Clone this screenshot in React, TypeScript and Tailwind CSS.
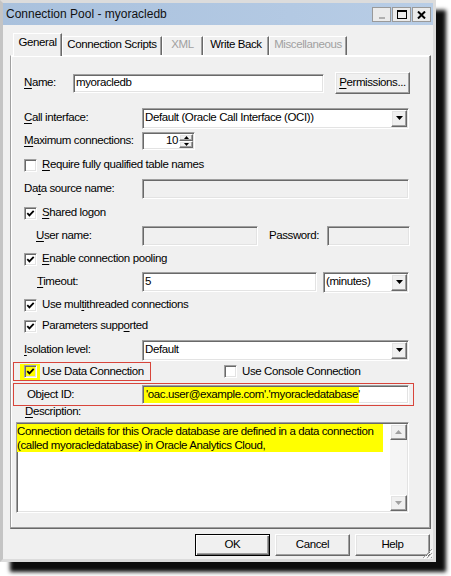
import React from "react";

const F = "font-['Liberation_Sans',Arial,sans-serif]";
const sunken =
  "border border-t-[#a0a0a0] border-l-[#a0a0a0] border-b-white border-r-white shadow-[inset_1px_1px_0_#696969,inset_-1px_-1px_0_#e3e3e3]";
const raised =
  "border border-t-white border-l-white border-b-[#696969] border-r-[#696969] shadow-[inset_-1px_-1px_0_#a0a0a0,inset_1px_1px_0_#e3e3e3]";

function U({ children }: { children: React.ReactNode }) {
  return <span className="underline underline-offset-[1.5px] decoration-[1px]">{children}</span>;
}

function Check({ checked, yellow }: { checked?: boolean; yellow?: boolean }) {
  return (
    <div
      className={`w-[13px] h-[13px] shrink-0 flex items-center justify-center ${
        yellow ? "bg-[#ffff00]" : "bg-white"
      } ${sunken}`}
    >
      {checked && (
        <svg width="9" height="9" viewBox="0 0 9 9">
          <path d="M1.3 4.2 L3.4 6.4 L7.7 1.8" stroke="#000" strokeWidth="1.8" fill="none" />
        </svg>
      )}
    </div>
  );
}

function DownArrow({ color = "#000" }: { color?: string }) {
  return (
    <svg width="7" height="4" viewBox="0 0 7 4">
      <path d="M0 0 H7 L3.5 4 Z" fill={color} />
    </svg>
  );
}

function UpArrow({ color = "#000" }: { color?: string }) {
  return (
    <svg width="7" height="4" viewBox="0 0 7 4">
      <path d="M0 4 H7 L3.5 0 Z" fill={color} />
    </svg>
  );
}

function SelectBox({ className, value }: { className: string; value: string }) {
  return (
    <div className={`h-[21px] bg-white flex items-center ${sunken} ${className}`}>
      <span className="flex-1 pl-[2px] leading-none whitespace-nowrap">{value}</span>
      <div className={`w-[16px] h-[17px] mr-[1px] bg-[#f0f0f0] flex items-center justify-center ${raised}`}>
        <DownArrow />
      </div>
    </div>
  );
}

function Btn({ children, className = "", def }: { children: React.ReactNode; className?: string; def?: boolean }) {
  return (
    <div
      className={`flex items-center justify-center bg-[#f0f0f0] ${
        def
          ? "border border-[#000] shadow-[inset_1px_1px_0_#fff,inset_-1px_-1px_0_#696969,inset_-2px_-2px_0_#a0a0a0]"
          : raised
      } ${className}`}
    >
      {children}
    </div>
  );
}

function CheckRow({
  checked,
  children,
  mt,
}: {
  checked?: boolean;
  children: React.ReactNode;
  mt: string;
}) {
  return (
    <div className={`flex items-center h-[20px] pl-[13px] ${mt}`}>
      <Check checked={checked} />
      <span className="ml-[5px] leading-none">{children}</span>
    </div>
  );
}

function Tab({
  children,
  className,
  selected,
  disabled,
}: {
  children: React.ReactNode;
  className: string;
  selected?: boolean;
  disabled?: boolean;
}) {
  return (
    <div
      className={`flex items-center justify-center bg-[#f0f0f0] border-t border-l border-t-white border-l-white border-r border-r-[#696969] shadow-[inset_-1px_0_0_#a0a0a0] ${
        selected ? "h-[23px] -mb-px relative z-10 pb-[4px]" : "h-[19px] pb-[2px]"
      } ${disabled ? "text-[#a0a0a0]" : ""} ${className}`}
    >
      <span className="leading-none">{children}</span>
    </div>
  );
}

export default function App() {
  return (
    <div className={`w-[451px] h-[576px] bg-white ${F} text-[11.5px] tracking-[-0.4px] text-black`}>
      <div className="w-[436px] h-[562px] flex flex-col bg-[#f0f0f0] border-[3px] border-[#dcdcdc] border-l-[#c4c4c4] shadow-[10px_10px_4px_rgba(0,0,0,0.95)] relative">
        {/* Title bar */}
        <div className="h-[22px] shrink-0 flex items-center justify-between pl-[3px] pr-[2px] bg-gradient-to-r from-[#a9c1dd] to-[#b8cde6]">
          <h1 className="text-xs font-normal leading-none tracking-normal text-[#111] whitespace-nowrap">
            Connection Pool - myoracledb
          </h1>
          <div className="flex gap-[1px] mt-[1px]">
            <div className="w-[19px] h-[15px] bg-[#ebebeb] border border-[#9a9a9a] flex items-end justify-center pb-[2px]">
              <div className="w-[6px] h-[2px] bg-[#b0b0b0]" />
            </div>
            <div className="w-[19px] h-[15px] bg-[#ebebeb] border border-[#9a9a9a] flex items-center justify-center">
              <div className="w-[10px] h-[9px] border border-black border-t-2" />
            </div>
            <div className="w-[19px] h-[15px] bg-[#ebebeb] border border-[#9a9a9a] flex items-center justify-center">
              <svg width="9" height="8" viewBox="0 0 9 8">
                <path d="M1 0.5 L8 7.5 M8 0.5 L1 7.5" stroke="#000" strokeWidth="2" />
              </svg>
            </div>
          </div>
        </div>

        {/* Tabs */}
        <div className="mt-[8px] ml-[10px] h-[22px] flex items-end relative z-10">
          <Tab selected className="w-[49px]">General</Tab>
          <Tab className="w-[100px]">Connection Scripts</Tab>
          <Tab disabled className="w-[41px]">XML</Tab>
          <Tab className="w-[66px]">Write Back</Tab>
          <Tab disabled className="w-[78px]">Miscellaneous</Tab>
        </div>

        {/* Panel */}
        <div className="ml-[7px] w-[421px] h-[474px] shrink-0 flex flex-col border border-t-white border-l-[#a0a0a0] border-b-[#696969] border-r-[#696969] shadow-[inset_-1px_-1px_0_#a0a0a0,inset_1px_1px_0_#fff]">
          {/* Name */}
          <div className="flex items-center h-[22px] mt-[16px] pl-[13px]">
            <span className="w-[49px] leading-none">
              <U>N</U>ame:
            </span>
            <div className={`w-[251px] h-[19px] bg-white flex items-center pl-[2px] ${sunken}`}>
              <span className="leading-none">myoracledb</span>
            </div>
            <Btn className="ml-[11px] w-[75px] h-[22px]">
              <span className="leading-none">
                <U>P</U>ermissions...
              </span>
            </Btn>
          </div>

          {/* Call interface */}
          <div className="flex items-center h-[22px] mt-[13px] pl-[13px]">
            <span className="w-[118px] leading-none">
              <U>C</U>all interface:
            </span>
            <SelectBox className="w-[267px]" value="Default (Oracle Call Interface (OCI))" />
          </div>

          {/* Max connections */}
          <div className="flex items-center h-[20px] mt-[2px] pl-[13px]">
            <span className="w-[118px] leading-none whitespace-nowrap">
              <U>M</U>aximum connections:
            </span>
            <div className={`w-[53px] h-[18px] bg-white flex items-center ${sunken}`}>
              <span className="flex-1 text-right pr-[1px] leading-none">10</span>
              <div className="w-[14px] h-[14px] flex flex-col mr-[1px]">
                <div className={`flex-1 bg-[#f0f0f0] flex items-center justify-center ${raised}`}>
                  <svg width="5" height="3" viewBox="0 0 5 3">
                    <path d="M0 3 H5 L2.5 0 Z" fill="#000" />
                  </svg>
                </div>
                <div className={`flex-1 bg-[#f0f0f0] flex items-center justify-center ${raised}`}>
                  <svg width="5" height="3" viewBox="0 0 5 3">
                    <path d="M0 0 H5 L2.5 3 Z" fill="#000" />
                  </svg>
                </div>
              </div>
            </div>
          </div>

          {/* Require fully qualified */}
          <CheckRow mt="mt-[4px]">
            <U>R</U>equire fully qualified table names
          </CheckRow>

          {/* Data source name */}
          <div className="flex items-center h-[22px] mt-[3px] pl-[13px]">
            <span className="w-[118px] leading-none">
              Da<U>t</U>a source name:
            </span>
            <div className={`w-[267px] h-[20px] bg-[#f0f0f0] ${sunken}`} />
          </div>

          {/* Shared logon */}
          <CheckRow checked mt="mt-[3px]">
            <U>S</U>hared logon
          </CheckRow>

          {/* User name / Password */}
          <div className="flex items-center h-[20px] mt-[3px] pl-[25px]">
            <span className="w-[106px] leading-none">
              <U>U</U>ser name:
            </span>
            <div className={`w-[116px] h-[20px] bg-[#f0f0f0] ${sunken}`} />
            <span className="ml-[11px] w-[58px] leading-none">Password:</span>
            <div className={`w-[83px] h-[20px] bg-[#f0f0f0] ${sunken}`} />
          </div>

          {/* Enable pooling */}
          <CheckRow checked mt="mt-[3px]">
            <U>E</U>nable connection pooling
          </CheckRow>

          {/* Timeout */}
          <div className="flex items-center h-[20px] mt-[3px] pl-[26px]">
            <span className="w-[105px] leading-none">
              <U>T</U>imeout:
            </span>
            <div className={`w-[175px] h-[20px] bg-white flex items-center pl-[2px] ${sunken}`}>
              <span className="leading-none">5</span>
            </div>
            <SelectBox className="ml-[6px] w-[86px]" value="(minutes)" />
          </div>

          {/* Multithreaded */}
          <CheckRow checked mt="mt-[3px]">
            Use mul<U>t</U>ithreaded connections
          </CheckRow>

          {/* Parameters */}
          <CheckRow checked mt="mt-[1px]">
            Parameters supp<U>o</U>rted
          </CheckRow>

          {/* Isolation level */}
          <div className="flex items-center h-[20px] mt-[4px] pl-[13px]">
            <span className="w-[118px] leading-none">
              <U>I</U>solation level:
            </span>
            <SelectBox className="w-[267px]" value="Default" />
          </div>

          {/* Use Data Connection */}
          <div className="flex items-center h-[19px] mt-[2px] pl-[2px]">
            <div className="w-[138px] h-[19px] border border-[#d8453b] flex items-center pl-[6px]">
              <div className="w-[20px] h-[16px] bg-[#ffff00] flex items-center pl-[4px]">
                <Check checked yellow />
              </div>
              <span className="ml-[2px] leading-none whitespace-nowrap">Use Data Connection</span>
            </div>
            <div className="ml-[73px] flex items-center">
              <Check />
              <span className="ml-[5px] leading-none">Use Console Connection</span>
            </div>
          </div>

          {/* Object ID */}
          <div className="mt-[2px] ml-[2px] w-[401px] h-[23px] border border-[#d8453b] flex items-center pl-[13px]">
            <span className="w-[115px] leading-none">Object ID:</span>
            <div className={`w-[267px] h-[19px] bg-white flex items-center pl-[1px] ${sunken}`}>
              <div className="h-[16px] w-[215px] bg-[#ffff00] flex items-center pl-[2px]">
                <span className="leading-none whitespace-nowrap">'oac.user@example.com'.'myoracledatabase'</span>
              </div>
            </div>
          </div>

          {/* Description label */}
          <div className="h-[12px] pl-[14px] flex items-center">
            <span className="leading-none">
              <U>D</U>escription:
            </span>
          </div>

          {/* Description textarea */}
          <div className={`mt-[4px] ml-[5px] w-[393px] h-[91px] bg-white flex ${sunken}`}>
            <div className="flex-1 pt-[1px]">
              <div className="w-[366px] bg-[#ffff00] leading-[14px]">
                <div className="whitespace-nowrap">
                  Connection details for this Oracle database are defined in a data connection
                </div>
                <div className="whitespace-nowrap">(called myoracledatabase) in Oracle Analytics Cloud,</div>
              </div>
            </div>
            <div className="w-[17px] my-[1px] mr-[1px] flex flex-col justify-between bg-[#f5f5f5]">
              <div className={`h-[16px] bg-[#f0f0f0] flex items-center justify-center ${raised}`}>
                <UpArrow color="#a0a0a0" />
              </div>
              <div className={`h-[16px] bg-[#f0f0f0] flex items-center justify-center ${raised}`}>
                <DownArrow color="#a0a0a0" />
              </div>
            </div>
          </div>
        </div>

        {/* Buttons */}
        <div className="mt-[5px] flex justify-end gap-[5px] pr-[3px]">
          <Btn def className="w-[75px] h-[22px]">
            <span className="leading-none">OK</span>
          </Btn>
          <Btn className="w-[75px] h-[22px]">
            <span className="leading-none">Cancel</span>
          </Btn>
          <Btn className="w-[75px] h-[22px]">
            <span className="leading-none">Help</span>
          </Btn>
        </div>

        {/* Resize grip */}
        <svg className="absolute right-[0px] bottom-[0px]" width="12" height="12" viewBox="0 0 12 12">
          <path d="M11 2 L2 11 M11 6 L6 11 M11 10 L10 11" stroke="#a0a0a0" strokeWidth="1" />
          <path d="M12 3 L3 12 M12 7 L7 12" stroke="#ffffff" strokeWidth="1" />
        </svg>
      </div>
    </div>
  );
}
